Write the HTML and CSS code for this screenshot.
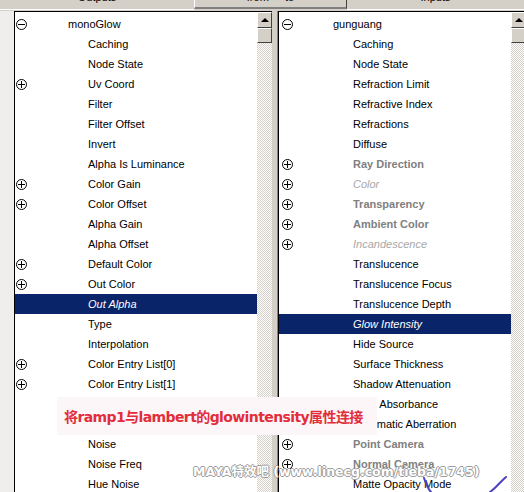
FILE: index.html
```html
<!DOCTYPE html>
<html lang="zh">
<head>
  <meta charset="UTF-8">
  <title>Connection Editor</title>
  <link rel="stylesheet" href="styles.css">
</head>
<body>
  <div class="tabs">
    <div class="tab tab-out"><span>Outputs</span></div>
    <div class="tab tab-mid"><span>from -&gt; to</span></div>
    <div class="tab tab-in"><span>Inputs</span></div>
  </div>

  <div class="panes">
    <div class="gutter"></div>

    <!-- left: outputs of monoGlow -->
    <div class="pane pane-left">
      <div class="list">
        <div class="row root"><span class="tog minus"></span><span class="lbl">monoGlow</span></div>
        <div class="row"><span class="tog"></span><span class="lbl">Caching</span></div>
        <div class="row"><span class="tog"></span><span class="lbl">Node State</span></div>
        <div class="row"><span class="tog plus"></span><span class="lbl">Uv Coord</span></div>
        <div class="row"><span class="tog"></span><span class="lbl">Filter</span></div>
        <div class="row"><span class="tog"></span><span class="lbl">Filter Offset</span></div>
        <div class="row"><span class="tog"></span><span class="lbl">Invert</span></div>
        <div class="row"><span class="tog"></span><span class="lbl">Alpha Is Luminance</span></div>
        <div class="row"><span class="tog plus"></span><span class="lbl">Color Gain</span></div>
        <div class="row"><span class="tog plus"></span><span class="lbl">Color Offset</span></div>
        <div class="row"><span class="tog"></span><span class="lbl">Alpha Gain</span></div>
        <div class="row"><span class="tog"></span><span class="lbl">Alpha Offset</span></div>
        <div class="row"><span class="tog plus"></span><span class="lbl">Default Color</span></div>
        <div class="row"><span class="tog plus"></span><span class="lbl">Out Color</span></div>
        <div class="row selected"><span class="tog"></span><span class="lbl">Out Alpha</span></div>
        <div class="row"><span class="tog"></span><span class="lbl">Type</span></div>
        <div class="row"><span class="tog"></span><span class="lbl">Interpolation</span></div>
        <div class="row"><span class="tog plus"></span><span class="lbl">Color Entry List[0]</span></div>
        <div class="row"><span class="tog plus"></span><span class="lbl">Color Entry List[1]</span></div>
        <div class="row"><span class="tog"></span><span class="lbl">U Wave</span></div>
        <div class="row"><span class="tog"></span><span class="lbl">V Wave</span></div>
        <div class="row"><span class="tog"></span><span class="lbl">Noise</span></div>
        <div class="row"><span class="tog"></span><span class="lbl">Noise Freq</span></div>
        <div class="row"><span class="tog"></span><span class="lbl">Hue Noise</span></div>
      </div>
      <div class="scroll">
        <div class="sb-btn"><span class="arrow"></span></div>
        <div class="sb-thumb"></div>
      </div>
    </div>

    <div class="split"></div>

    <!-- right: inputs of gunguang -->
    <div class="pane pane-right">
      <div class="list">
        <div class="row root"><span class="tog minus"></span><span class="lbl">gunguang</span></div>
        <div class="row"><span class="tog"></span><span class="lbl">Caching</span></div>
        <div class="row"><span class="tog"></span><span class="lbl">Node State</span></div>
        <div class="row"><span class="tog"></span><span class="lbl">Refraction Limit</span></div>
        <div class="row"><span class="tog"></span><span class="lbl">Refractive Index</span></div>
        <div class="row"><span class="tog"></span><span class="lbl">Refractions</span></div>
        <div class="row"><span class="tog"></span><span class="lbl">Diffuse</span></div>
        <div class="row locked"><span class="tog plus"></span><span class="lbl">Ray Direction</span></div>
        <div class="row faded"><span class="tog plus"></span><span class="lbl">Color</span></div>
        <div class="row locked"><span class="tog plus"></span><span class="lbl">Transparency</span></div>
        <div class="row locked"><span class="tog plus"></span><span class="lbl">Ambient Color</span></div>
        <div class="row faded"><span class="tog plus"></span><span class="lbl">Incandescence</span></div>
        <div class="row"><span class="tog"></span><span class="lbl">Translucence</span></div>
        <div class="row"><span class="tog"></span><span class="lbl">Translucence Focus</span></div>
        <div class="row"><span class="tog"></span><span class="lbl">Translucence Depth</span></div>
        <div class="row selected"><span class="tog"></span><span class="lbl">Glow Intensity</span></div>
        <div class="row"><span class="tog"></span><span class="lbl">Hide Source</span></div>
        <div class="row"><span class="tog"></span><span class="lbl">Surface Thickness</span></div>
        <div class="row"><span class="tog"></span><span class="lbl">Shadow Attenuation</span></div>
        <div class="row"><span class="tog"></span><span class="lbl">Light Absorbance</span></div>
        <div class="row"><span class="tog"></span><span class="lbl">Chromatic Aberration</span></div>
        <div class="row locked"><span class="tog plus"></span><span class="lbl">Point Camera</span></div>
        <div class="row locked"><span class="tog plus"></span><span class="lbl">Normal Camera</span></div>
        <div class="row"><span class="tog"></span><span class="lbl">Matte Opacity Mode</span></div>
      </div>
      <div class="scroll">
        <div class="sb-btn"><span class="arrow"></span></div>
        <div class="sb-thumb"></div>
      </div>
    </div>
  </div>

  <!-- annotations pasted on top of the screenshot -->
  <div class="banner">将ramp1与lambert的glowintensity属性连接</div>
  <div class="watermark">MAYA特效吧 (www.linecg.com/tieba/1745)</div>
  <svg class="scribble" width="104" height="24" viewBox="0 0 104 24">
    <path d="M4 10 C6 16 9 22 11 24" fill="none" stroke="#4b40c4" stroke-width="2" stroke-linecap="round"/>
    <path d="M70 24 C76 20 80 14 86 9" fill="none" stroke="#4b40c4" stroke-width="2" stroke-linecap="round"/>
  </svg>
</body>
</html>
```

FILE: styles.css
```css
html, body {
  margin: 0;
  padding: 0;
  width: 524px;
  height: 492px;
  overflow: hidden;
}

body {
  position: relative;
  background: #d4d0c8;
  font-family: 'Liberation Sans', Arial, sans-serif;
  font-size: 11px;
  color: #000;
}

/* tab strip, mostly scrolled off the top */
.tabs {
  display: flex;
  height: 10px;
  overflow: hidden;
}

.tab {
  box-sizing: border-box;
  text-align: center;
  border-bottom: 1px solid #fff;
  background: #d4d0c8;
}

.tab span {
  display: block;
  margin-top: -10px;
  line-height: 14px;
}

.tab-out {
  width: 194px;
}

.tab-mid {
  width: 153px;
  height: 9px;
  border-left: 1px solid #fff;
  border-right: 1px solid #404040;
  border-bottom: 2px solid #808080;
}

.tab-in {
  flex: 1;
}

.panes {
  display: flex;
  height: 482px;
  padding-top: 1px;
}

.gutter {
  flex: none;
  width: 14px;
  background: #efeeec;
}

.pane {
  box-sizing: border-box;
  display: flex;
  border-top: 1px solid #000;
  border-left: 1px solid #000;
  flex: none;
}

.pane-left {
  width: 258px;
}

.split {
  flex: none;
  width: 5px;
  background: #d4d0c8;
  border-right: 1px solid #808080;
}

.pane-right {
  width: 249px;
}

.list {
  flex: 1;
  background: #fff;
  padding-top: 2px;
  overflow: hidden;
}

.row {
  display: flex;
  align-items: center;
  height: 20px;
  padding-left: 1px;
  white-space: nowrap;
}

.pane-right .row {
  padding-left: 3px;
}

.tog {
  position: relative;
  flex: none;
  box-sizing: border-box;
  width: 11px;
  height: 11px;
}

.tog.plus, .tog.minus {
  border: 1px solid #000;
  border-radius: 50%;
}

.tog.plus::before, .tog.minus::before {
  content: '';
  position: absolute;
  left: 1px;
  right: 1px;
  top: 4px;
  height: 1px;
  background: #000;
}

.tog.plus::after {
  content: '';
  position: absolute;
  top: 1px;
  bottom: 1px;
  left: 4px;
  width: 1px;
  background: #000;
}

.lbl {
  margin-left: 61px;
}

.root .lbl {
  margin-left: 41px;
}

.pane-right .lbl {
  margin-left: 60px;
}

.pane-right .root .lbl {
  margin-left: 40px;
}

.row.selected {
  background: #0a246a;
  color: #fff;
  font-style: italic;
}

.row.locked .lbl {
  color: #808080;
  font-weight: bold;
}

.row.faded .lbl {
  color: #a8a8a8;
  font-style: italic;
}

/* classic dithered scrollbar */
.scroll {
  width: 15px;
  flex: none;
  background: repeating-conic-gradient(#d4d0c8 0 25%, #fff 0 50%) 0 0 / 2px 2px;
}

.pane-right .scroll {
  width: 16px;
}

.sb-btn, .sb-thumb {
  box-sizing: border-box;
  background: #d4d0c8;
  border-top: 1px solid #fff;
  border-left: 1px solid #fff;
  border-right: 1px solid #404040;
  border-bottom: 1px solid #404040;
}

.sb-btn {
  height: 16px;
  display: flex;
  align-items: center;
  justify-content: center;
}

.sb-thumb {
  height: 15px;
}

.arrow {
  width: 0;
  height: 0;
  border-left: 4px solid transparent;
  border-right: 4px solid transparent;
  border-bottom: 4px solid #000;
}

.banner {
  position: absolute;
  left: 57px;
  top: 397px;
  width: 320px;
  height: 38px;
  box-sizing: border-box;
  padding-left: 7px;
  display: flex;
  align-items: center;
  background: #fdf6f8;
  color: #e22d3a;
  font-family: 'DejaVu Sans', 'Noto Sans CJK SC', sans-serif;
  font-weight: bold;
  font-size: 14px;
  letter-spacing: -0.6px;
  white-space: nowrap;
}

.watermark {
  position: absolute;
  left: 193px;
  top: 461px;
  color: #fff;
  font-family: 'DejaVu Sans', 'Noto Sans CJK SC', sans-serif;
  font-weight: bold;
  font-size: 12.5px;
  white-space: nowrap;
  text-shadow: 1px 0 #9a9a9a, -1px 0 #9a9a9a, 0 1px #9a9a9a, 0 -1px #9a9a9a;
}

.scribble {
  position: absolute;
  left: 420px;
  top: 468px;
}
```
